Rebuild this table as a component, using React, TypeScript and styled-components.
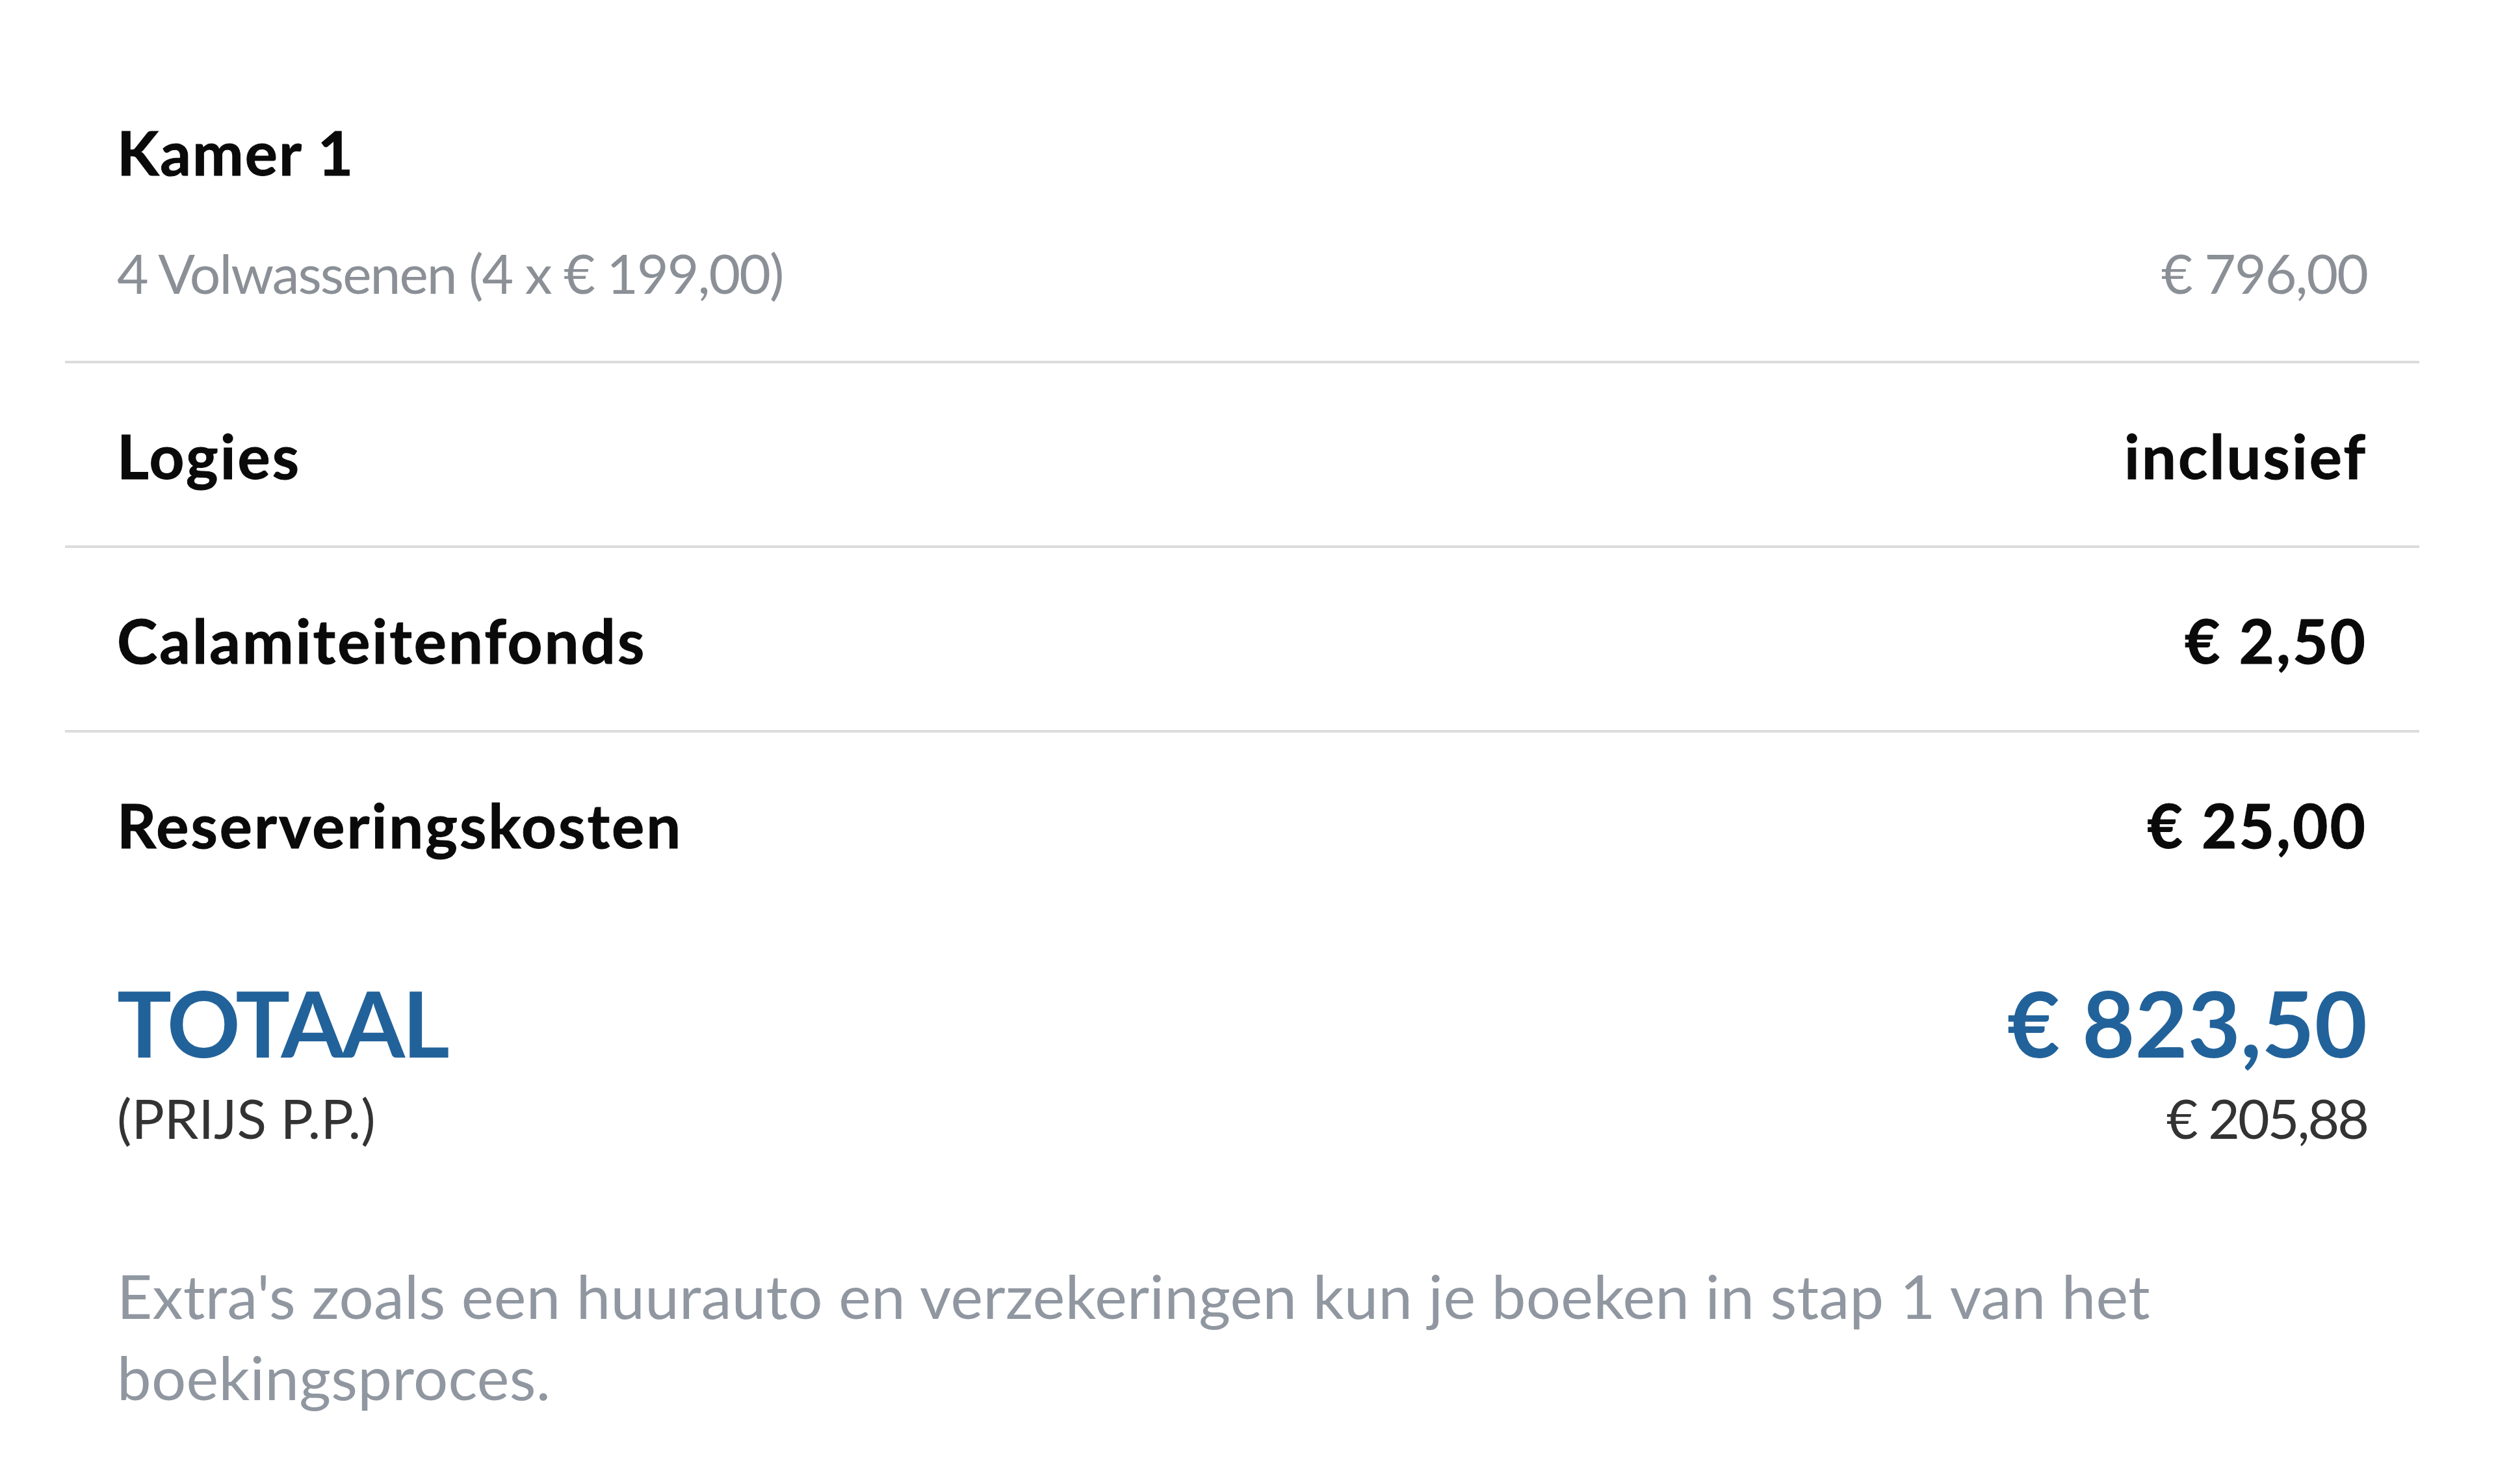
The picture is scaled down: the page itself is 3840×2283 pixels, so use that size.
import React from "react";
import styled, { createGlobalStyle } from "styled-components";

const GlobalStyle = createGlobalStyle`
  html, body {
    margin: 0;
    padding: 0;
    background: #ffffff;
  }
  body {
    font-family: Lato, "Open Sans", "Liberation Sans", sans-serif;
    -webkit-font-smoothing: antialiased;
  }
`;

const Summary = styled.section`
  margin: 0 118px 0 100px;
  display: flex;
  flex-direction: column;
`;

const RoomBlock = styled.div`
  padding: 179px 80px 85px;
  display: flex;
  flex-direction: column;
  gap: 81px;
  border-bottom: 4px solid #dcdcdc;
`;

const RoomTitle = styled.h2`
  margin: 0;
  font-size: 94px;
  line-height: 110px;
  font-weight: 700;
  letter-spacing: 2px;
  -webkit-text-stroke: 1px currentColor;
  color: #0a0a0a;
`;

const Line = styled.div`
  display: flex;
  justify-content: space-between;
  align-items: baseline;
`;

const MutedText = styled.span`
  font-size: 84px;
  line-height: 100px;
  font-weight: 400;
  letter-spacing: -2px;
  color: #8b9097;
`;

const CostRow = styled.div<{ $divider?: boolean }>`
  display: flex;
  justify-content: space-between;
  align-items: baseline;
  padding: 87px 80px 83px;
  border-bottom: ${(p) => (p.$divider ? "4px solid #dcdcdc" : "none")};
`;

const CostText = styled.span`
  font-size: 94px;
  line-height: 110px;
  font-weight: 700;
  letter-spacing: 3px;
  -webkit-text-stroke: 1px currentColor;
  color: #0a0a0a;
`;

const TotalBlock = styled.div`
  display: flex;
  justify-content: space-between;
  padding: 91px 80px 0;
`;

const TotalColumn = styled.div<{ $align: "left" | "right" }>`
  display: flex;
  flex-direction: column;
  align-items: ${(p) => (p.$align === "right" ? "flex-end" : "flex-start")};
  gap: 22px;
`;

const TotalText = styled.span<{ $tight?: boolean }>`
  font-size: 140px;
  line-height: 150px;
  font-weight: 700;
  letter-spacing: ${(p) => (p.$tight ? "-4px" : "0")};
  color: #22629a;
`;

const PerPerson = styled.span<{ $tight?: boolean }>`
  font-size: 84px;
  line-height: 100px;
  font-weight: 400;
  letter-spacing: ${(p) => (p.$tight ? "-3px" : "0")};
  color: #333333;
`;

const Note = styled.p`
  margin: 160px 0 0;
  padding: 0 80px;
  max-width: 3350px;
  font-size: 94px;
  line-height: 125px;
  font-weight: 400;
  letter-spacing: 0.3px;
  color: #9097a0;
`;

const costs = [
  { label: "Logies", value: "inclusief" },
  { label: "Calamiteitenfonds", value: "€ 2,50" },
  { label: "Reserveringskosten", value: "€ 25,00" },
];

export default function App() {
  return (
    <>
      <GlobalStyle />
      <Summary>
        <RoomBlock>
          <RoomTitle>Kamer 1</RoomTitle>
          <Line>
            <MutedText>4 Volwassenen (4 x € 199,00)</MutedText>
            <MutedText>€ 796,00</MutedText>
          </Line>
        </RoomBlock>
        {costs.map((c, i) => (
          <CostRow key={c.label} $divider={i < costs.length - 1}>
            <CostText>{c.label}</CostText>
            <CostText>{c.value}</CostText>
          </CostRow>
        ))}
        <TotalBlock>
          <TotalColumn $align="left">
            <TotalText $tight>TOTAAL</TotalText>
            <PerPerson>(PRIJS P.P.)</PerPerson>
          </TotalColumn>
          <TotalColumn $align="right">
            <TotalText>€ 823,50</TotalText>
            <PerPerson $tight>€ 205,88</PerPerson>
          </TotalColumn>
        </TotalBlock>
        <Note>
          Extra's zoals een huurauto en verzekeringen kun je boeken in stap 1 van het boekingsproces.
        </Note>
      </Summary>
    </>
  );
}
